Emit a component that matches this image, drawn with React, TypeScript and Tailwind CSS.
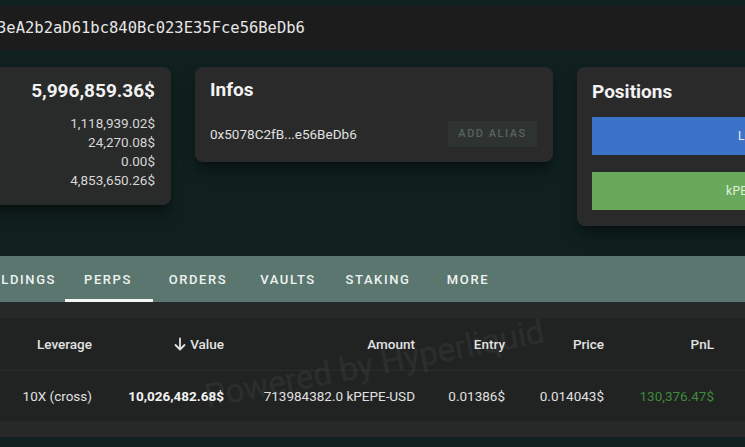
import React from 'react';

const tabs = ['HOLDINGS', 'PERPS', 'ORDERS', 'VAULTS', 'STAKING', 'MORE'];

const cols = 'grid grid-cols-[92px_132px_191px_90px_99px_110px] items-center text-right';

const App: React.FC = () => {
  return (
    <div className="w-[745px] h-[447px] overflow-hidden bg-[#0f201f] font-['Roboto',sans-serif] text-[#e4e4e4] relative">
      {/* address bar */}
      <div className="mt-[6px] h-[44px] bg-[#1c1c1c] flex items-center pt-[2px] overflow-hidden">
        <span className="ml-[-3px] whitespace-nowrap font-['DejaVu_Sans_Mono',monospace] text-[15.5px] text-[#e6e6e6]">
          3eA2b2aD61bc840Bc023E35Fce56BeDb6
        </span>
      </div>

      {/* cards */}
      <div className="mt-[17px] flex items-start gap-6 ml-[-100px]">
        <div className="w-[271px] shrink-0 h-[138px] rounded-lg bg-[#292a2a] shadow-lg shadow-black/40 pr-4 pt-[12px] flex flex-col items-end">
          <div className="text-[19px] font-bold text-[#f2f2f2] leading-[24px]">5,996,859.36$</div>
          <div className="mt-[11px] flex flex-col items-end text-[13.5px] leading-[19px] text-[#d6d6d6]">
            <span>1,118,939.02$</span>
            <span>24,270.08$</span>
            <span>0.00$</span>
            <span>4,853,650.26$</span>
          </div>
        </div>

        <div className="w-[358px] shrink-0 h-[95px] rounded-lg bg-[#2a2a2a] shadow-lg shadow-black/40 px-[15px] pt-[11px]">
          <div className="text-[19px] font-bold text-[#f2f2f2] leading-[24px]">Infos</div>
          <div className="mt-[19px] flex items-center justify-between pr-[1px]">
            <span className="text-[13.5px] text-[#e0e0e0]">0x5078C2fB...e56BeDb6</span>
            <button className="w-[89px] h-[26px] bg-[#2e3231] text-[11px] font-medium tracking-[1.5px] text-[#56645f]">
              ADD ALIAS
            </button>
          </div>
        </div>

        <div className="w-[356px] shrink-0 h-[159px] rounded-lg bg-[#2a2a2a] shadow-lg shadow-black/40 px-[15px] pt-[13px]">
          <div className="text-[19px] font-bold text-[#f2f2f2] leading-[24px]">Positions</div>
          <div className="mt-[13px] h-[38px] bg-[#3c72c8] flex items-center pl-[146px] text-[12px] tracking-wide text-[#e4ecf7]">
            LONG
          </div>
          <div className="mt-[17px] h-[38px] bg-[#68a95c] flex items-center pl-[134px] text-[12px] tracking-wide text-[#e2f0de]">
            kPEPE-USD
          </div>
        </div>
      </div>

      {/* tabs */}
      <div className="mt-[30px] h-[46px] bg-[#5a766f] flex ml-[-27px]">
        {tabs.map((t) => (
          <div key={t} className="relative w-[90px] shrink-0 flex items-center justify-center pt-[1px] text-[13px] font-medium tracking-[1.6px] text-[#eef3f1]">
            {t}
            {t === 'PERPS' && <div className="absolute bottom-0 left-[2px] right-0 h-[3px] bg-[#f4f6f5]" />}
          </div>
        ))}
      </div>

      {/* table */}
      <div className="bg-[#272929]">
        <div className="h-[16px]" />
        <div className={`${cols} h-[53px] bg-[#212323] border-b border-[#2a2c2c] text-[13.5px] font-medium text-[#e2e2e2]`}>
          <span>Leverage</span>
          <span className="flex items-center justify-end gap-[3px]">
            <svg width="14" height="14" viewBox="0 0 14 14" fill="none" stroke="#e2e2e2" strokeWidth="1.8" strokeLinecap="round" strokeLinejoin="round">
              <path d="M7 1.5v11M2.5 8l4.5 4.5L11.5 8" />
            </svg>
            Value
          </span>
          <span>Amount</span>
          <span>Entry</span>
          <span>Price</span>
          <span>PnL</span>
        </div>
        <div className={`${cols} h-[50px] bg-[#212323] text-[13.5px] text-[#e0e0e0]`}>
          <span>10X (cross)</span>
          <span className="font-bold text-[#f2f2f2]">10,026,482.68$</span>
          <span className="whitespace-nowrap">713984382.0 kPEPE-USD</span>
          <span>0.01386$</span>
          <span>0.014043$</span>
          <span className="text-[#3f8a3c]">130,376.47$</span>
        </div>
        <div className="h-[16px]" />
      </div>

      {/* watermark */}
      <div className="absolute left-[205px] top-[372px] -rotate-[11deg] origin-left whitespace-nowrap text-[33px] text-white/[0.05] pointer-events-none">
        Powered by Hyperliquid
      </div>
    </div>
  );
};

export default App;
